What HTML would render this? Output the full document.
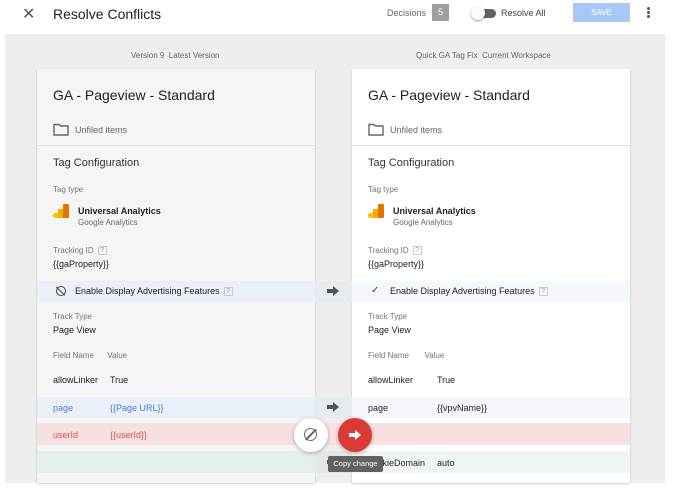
<!DOCTYPE html>
<html><head><meta charset="utf-8"><style>
*{margin:0;padding:0;box-sizing:border-box}
body{width:676px;height:488px;background:#fff;font-family:"Liberation Sans",sans-serif;position:relative;overflow:hidden;color:#212121}
.a{position:absolute;white-space:nowrap}
.s{font-size:8px;color:#757575}
.m{font-size:9px;color:#212121}
.q{display:inline-block;width:9px;height:9px;border:1px solid #ccc;font-size:7px;color:#999;text-align:center;line-height:8px;margin-left:4px;vertical-align:middle}
</style></head><body>
<!-- top bar -->
<div class="a" style="left:22px;top:4px;font-size:16px;color:#555">✕</div>
<div class="a" style="left:53px;top:6px;font-size:14px;color:#212121">Resolve Conflicts</div>
<div class="a" style="left:387px;top:8px;font-size:9px;color:#666">Decisions</div>
<div class="a" style="left:432px;top:4px;width:17px;height:17px;background:#9e9e9e;color:#fff;font-size:9px;text-align:center;line-height:17px">5</div>
<div class="a" style="left:474px;top:9px;width:22px;height:9px;border-radius:5px;background:#616161"></div>
<div class="a" style="left:471px;top:6px;width:14px;height:14px;border-radius:50%;background:#fafafa;box-shadow:0 1px 2px rgba(0,0,0,.4)"></div>
<div class="a" style="left:501px;top:8px;font-size:9px;color:#444">Resolve All</div>
<div class="a" style="left:573px;top:3px;width:57px;height:19px;background:#a8c7f5;color:#fff;font-size:8px;text-align:center;line-height:19px">SAVE</div>
<div class="a" style="left:647px;top:7px;width:3px;height:3px;border-radius:50%;background:#555;box-shadow:0 4px 0 #555,0 8px 0 #555"></div>
<!-- gray area -->
<div class="a" style="left:5px;top:34px;width:660px;height:449px;background:#eeeeee"></div>
<div class="a s" style="left:131px;top:51px;color:#666">Version 9&nbsp; Latest Version</div>
<div class="a s" style="left:416px;top:51px;color:#666">Quick GA Tag Fix&nbsp; Current Workspace</div>
<!-- cards -->
<div class="a" style="left:37px;top:69px;width:278px;height:414px;background:#f5f5f5;box-shadow:0 1px 2px rgba(0,0,0,.2)"></div>
<div class="a" style="left:352px;top:69px;width:278px;height:414px;background:#fff;box-shadow:0 1px 2px rgba(0,0,0,.2)"></div>
<div class="a" style="left:37px;top:145px;width:278px;height:1px;background:#e0e0e0"></div>
<div class="a" style="left:352px;top:145px;width:278px;height:1px;background:#e0e0e0"></div>
<!-- bands -->
<div class="a" style="left:37px;top:281px;width:278px;height:21px;background:#eaf0f8"></div>
<div class="a" style="left:315px;top:281px;width:37px;height:21px;background:#e6ebf1"></div>
<div class="a" style="left:352px;top:281px;width:278px;height:21px;background:#f4f8fd"></div>
<div class="a" style="left:37px;top:397px;width:278px;height:21px;background:#eaf0f8"></div>
<div class="a" style="left:315px;top:397px;width:37px;height:21px;background:#e6ebf1"></div>
<div class="a" style="left:352px;top:397px;width:278px;height:21px;background:#f4f8fd"></div>
<div class="a" style="left:37px;top:423px;width:593px;height:22px;background:#f7e0e0"></div>
<div class="a" style="left:37px;top:451px;width:278px;height:22px;background:#e4efe9"></div>
<div class="a" style="left:315px;top:451px;width:37px;height:22px;background:#e2e9e5"></div>
<div class="a" style="left:352px;top:451px;width:278px;height:22px;background:#eef6f1"></div>
<!-- left content -->
<div class="a" style="left:53px;top:87px;font-size:14px">GA - Pageview - Standard</div>
<svg class="a" style="left:53px;top:123px" width="16" height="13" viewBox="0 0 16 13"><path d="M1 1.5h5l1.5 1.5H15V12H1z" fill="none" stroke="#666" stroke-width="1.4"/></svg>
<div class="a s" style="left:75px;top:125px;font-size:9px;color:#666">Unfiled items</div>
<div class="a" style="left:53px;top:157px;font-size:11px;color:#333">Tag Configuration</div>
<div class="a s" style="left:53px;top:185px">Tag type</div>
<svg class="a" style="left:53px;top:204px" width="17" height="14" viewBox="0 0 17 14"><rect x="0" y="9" width="6" height="5" rx="2.5" fill="#fbbc04"/><rect x="5" y="5" width="6" height="9" fill="#f9ab00"/><rect x="10" y="0" width="6" height="14" rx="1" fill="#e37400"/></svg>
<div class="a" style="left:78px;top:206px;font-size:9px;font-weight:bold">Universal Analytics</div>
<div class="a s" style="left:78px;top:218px;color:#666">Google Analytics</div>
<div class="a s" style="left:53px;top:246px">Tracking ID<span class="q">?</span></div>
<div class="a m" style="left:53px;top:259px">{{gaProperty}}</div>
<div class="a" style="left:56px;top:286px;width:10px;height:10px;border:1.3px solid #444;border-radius:50%"></div>
<div class="a" style="left:60px;top:285px;width:1.3px;height:12px;background:#444;transform:rotate(-45deg)"></div>
<div class="a m" style="left:75px;top:286px">Enable Display Advertising Features<span class="q">?</span></div>
<div class="a s" style="left:53px;top:312px">Track Type</div>
<div class="a m" style="left:53px;top:325px">Page View</div>
<div class="a s" style="left:53px;top:351px">Field Name&nbsp;&nbsp;&nbsp;&nbsp;&nbsp;&nbsp;Value</div>
<div class="a m" style="left:53px;top:375px">allowLinker</div>
<div class="a m" style="left:110px;top:375px">True</div>
<div class="a m" style="left:53px;top:403px;color:#4a7fd6">page</div>
<div class="a m" style="left:110px;top:403px;color:#4a7fd6">{{Page URL}}</div>
<div class="a m" style="left:53px;top:430px;color:#d65050">userId</div>
<div class="a m" style="left:110px;top:430px;color:#d65050">{{userId}}</div>
<!-- arrows -->
<svg class="a" style="left:327px;top:286px" width="12" height="10" viewBox="0 0 12 10"><path d="M0 3h6V0l6 5-6 5V7H0z" fill="#555"/></svg>
<svg class="a" style="left:327px;top:402px" width="12" height="10" viewBox="0 0 12 10"><path d="M0 3h6V0l6 5-6 5V7H0z" fill="#555"/></svg>
<!-- right content -->
<div class="a" style="left:368px;top:87px;font-size:14px">GA - Pageview - Standard</div>
<svg class="a" style="left:368px;top:123px" width="16" height="13" viewBox="0 0 16 13"><path d="M1 1.5h5l1.5 1.5H15V12H1z" fill="none" stroke="#666" stroke-width="1.4"/></svg>
<div class="a s" style="left:390px;top:125px;font-size:9px;color:#666">Unfiled items</div>
<div class="a" style="left:368px;top:157px;font-size:11px;color:#333">Tag Configuration</div>
<div class="a s" style="left:368px;top:185px">Tag type</div>
<svg class="a" style="left:368px;top:204px" width="17" height="14" viewBox="0 0 17 14"><rect x="0" y="9" width="6" height="5" rx="2.5" fill="#fbbc04"/><rect x="5" y="5" width="6" height="9" fill="#f9ab00"/><rect x="10" y="0" width="6" height="14" rx="1" fill="#e37400"/></svg>
<div class="a" style="left:393px;top:206px;font-size:9px;font-weight:bold">Universal Analytics</div>
<div class="a s" style="left:393px;top:218px;color:#666">Google Analytics</div>
<div class="a s" style="left:368px;top:246px">Tracking ID<span class="q">?</span></div>
<div class="a m" style="left:368px;top:259px">{{gaProperty}}</div>
<div class="a" style="left:371px;top:285px;font-size:10px;color:#444">✓</div>
<div class="a m" style="left:390px;top:286px">Enable Display Advertising Features<span class="q">?</span></div>
<div class="a s" style="left:368px;top:312px">Track Type</div>
<div class="a m" style="left:368px;top:325px">Page View</div>
<div class="a s" style="left:368px;top:351px">Field Name&nbsp;&nbsp;&nbsp;&nbsp;&nbsp;&nbsp;&nbsp;Value</div>
<div class="a m" style="left:368px;top:375px">allowLinker</div>
<div class="a m" style="left:437px;top:375px">True</div>
<div class="a m" style="left:368px;top:403px">page</div>
<div class="a m" style="left:437px;top:403px">{{vpvName}}</div>
<svg class="a" style="left:327px;top:457px" width="12" height="10" viewBox="0 0 12 10"><path d="M0 3h6V0l6 5-6 5V7H0z" fill="#555"/></svg>
<div class="a m" style="left:368px;top:458px">cookieDomain</div>
<div class="a m" style="left:437px;top:458px">auto</div>
<!-- floating buttons -->
<div class="a" style="left:294px;top:418px;width:34px;height:34px;border-radius:50%;background:#fff;box-shadow:0 1px 4px rgba(0,0,0,.3)"></div>
<div class="a" style="left:304px;top:428px;width:13px;height:13px;border:1.5px solid #666;border-radius:50%"></div>
<div class="a" style="left:310px;top:427px;width:1.5px;height:15px;background:#666;transform:rotate(45deg)"></div>
<div class="a" style="left:338px;top:418px;width:34px;height:34px;border-radius:50%;background:#db3a34;box-shadow:0 1px 4px rgba(0,0,0,.3)"></div>
<svg class="a" style="left:349px;top:430px" width="12" height="10" viewBox="0 0 12 10"><path d="M0 3h6V0l6 5-6 5V7H0z" fill="#fff"/></svg>
<div class="a" style="left:328px;top:456px;width:55px;height:16px;background:#616161;border-radius:2px;color:#fff;font-size:7.5px;text-align:center;line-height:16px">Copy change</div>
</body></html>
